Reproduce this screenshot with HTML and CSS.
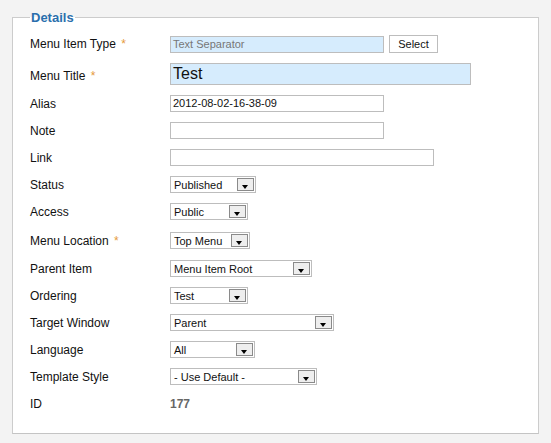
FILE: index.html
```html
<!DOCTYPE html>
<html lang="en">
  <head>
    <meta name="viewport" content="width=device-width, initial-scale=1" />
    <title>Menu Item: Details</title>
    <link rel="stylesheet" href="styles.css">
  </head>

  <body>
    <div class="page">
      <fieldset class="details">
        <legend>Details</legend>

        <div class="row">
          <label>Menu Item Type <span class="star">*</span></label>
          <div class="field">
            <span class="input type">Text Separator</span>
            <span class="button">Select</span>
          </div>
        </div>

        <div class="row title-row">
          <label>Menu Title <span class="star">*</span></label>
          <span class="input big">Test</span>
        </div>

        <div class="row">
          <label>Alias</label>
          <span class="input w214">2012-08-02-16-38-09</span>
        </div>

        <div class="row">
          <label>Note</label>
          <span class="input w214"></span>
        </div>

        <div class="row">
          <label>Link</label>
          <span class="input w264"></span>
        </div>

        <div class="row">
          <label>Status</label>
          <div class="select" style="width: 86px">Published<span class="arrow"></span></div>
        </div>

        <div class="row">
          <label>Access</label>
          <div class="select" style="width: 78px">Public<span class="arrow"></span></div>
        </div>

        <div class="row loose">
          <label>Menu Location <span class="star">*</span></label>
          <div class="select" style="width: 80px">Top Menu<span class="arrow"></span></div>
        </div>

        <div class="row gap1">
          <label>Parent Item</label>
          <div class="select" style="width: 142px">Menu Item Root<span class="arrow"></span></div>
        </div>

        <div class="row">
          <label>Ordering</label>
          <div class="select" style="width: 78px">Test<span class="arrow"></span></div>
        </div>

        <div class="row">
          <label>Target Window</label>
          <div class="select" style="width: 164px">Parent<span class="arrow"></span></div>
        </div>

        <div class="row">
          <label>Language</label>
          <div class="select" style="width: 85px">All<span class="arrow"></span></div>
        </div>

        <div class="row">
          <label>Template Style</label>
          <div class="select" style="width: 147px">- Use Default -<span class="arrow"></span></div>
        </div>

        <div class="row">
          <label>ID</label>
          <span class="id">177</span>
        </div>
      </fieldset>
    </div>
  </body>
</html>
```

FILE: styles.css
```css
body {
  margin: 0;
  background-color: #f3f3f3;
  font-family: "Liberation Sans", Arial, sans-serif;
  color: #111;
}

.page {
  padding: 10px 12px 0 12px;
}

.details {
  margin: 0;
  padding: 10px 0 11px 17px;
  background: #ffffff;
  border: 1px solid #cccccc;
  border-bottom-color: #c4c4c4;
}

.details legend {
  padding: 0 1px;
  font-size: 13px;
  font-weight: bold;
  color: #2a6fad;
  line-height: 15px;
}

.row {
  display: flex;
  align-items: center;
  min-height: 17px;
  margin-bottom: 10px;
}

.row.title-row label {
  padding-top: 3px;
}

.row.loose {
  padding-top: 2px;
}

.row.gap1 {
  padding-top: 1px;
}

.row label {
  width: 140px;
  flex: none;
  font-size: 12px;
  line-height: 14px;
}

.star {
  color: #e59a3b;
  margin-left: 2px;
}

.field {
  display: flex;
  align-items: center;
}

.input {
  display: block;
  box-sizing: border-box;
  height: 17px;
  padding: 0 2px;
  font-size: 11px;
  line-height: 15px;
  background: #ffffff;
  border: 1px solid #bdbdbd;
}

.input.type {
  width: 214px;
  background: #d6ecfd;
  color: #777;
}

.input.big {
  width: 301px;
  height: 22px;
  font-size: 16px;
  line-height: 20px;
  background: #d6ecfd;
}

.w214 {
  width: 214px;
}

.w264 {
  width: 264px;
}

.button {
  box-sizing: border-box;
  width: 49px;
  height: 18px;
  margin-left: 5px;
  border: 1px solid #bdbdbd;
  background: #fff;
  font-size: 11px;
  line-height: 16px;
  text-align: center;
}

.select {
  box-sizing: border-box;
  display: flex;
  align-items: center;
  justify-content: space-between;
  height: 17px;
  padding: 0 1px 0 3px;
  font-size: 11px;
  background: #fff;
  border: 1px solid #bdbdbd;
}

.arrow {
  position: relative;
  box-sizing: border-box;
  width: 17px;
  height: 13px;
  border: 1px solid #8a8a8a;
  background: #eeeeee;
}

.arrow:after {
  content: "";
  position: absolute;
  left: 4px;
  top: 6px;
  border-left: 3.5px solid transparent;
  border-right: 3.5px solid transparent;
  border-top: 4px solid #000;
}

.id {
  font-size: 12px;
  font-weight: bold;
  color: #666;
}
```
